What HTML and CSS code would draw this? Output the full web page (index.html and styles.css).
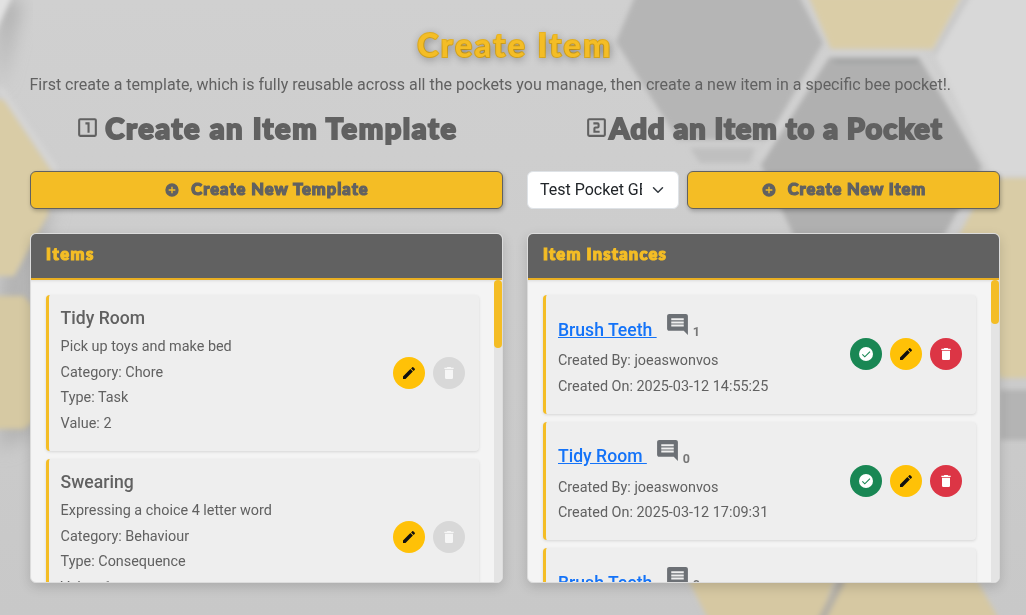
FILE: index.html
```html
<!DOCTYPE html>
<html lang="en">
<head>
<meta charset="utf-8">
<title>Create Item</title>
<link rel="stylesheet" href="styles.css">
</head>
<body>
<svg class="backdrop" viewBox="0 0 1026 615" preserveAspectRatio="none" aria-hidden="true">
  <defs>
    <filter id="soft" x="-20%" y="-20%" width="140%" height="140%"><feGaussianBlur stdDeviation="2.5"/></filter>
    <filter id="wide" x="-50%" y="-50%" width="200%" height="200%"><feGaussianBlur stdDeviation="9"/></filter>
    <linearGradient id="base" x1="0" y1="0" x2="0" y2="1"><stop offset="0" stop-color="#d0d0d0"/><stop offset="1" stop-color="#c8c8c8"/></linearGradient>
  </defs>
  <rect width="1026" height="615" fill="url(#base)"/>
  <path d="M0 90V0H22Z" fill="#aeaeae" filter="url(#wide)"/>
  <path d="M-8 40V-8H14Z" fill="#e2e2e2" filter="url(#soft)"/>
  <path d="M30 215L55 200 30 280 40 430 0 450V280Z" fill="#b2b2b2" filter="url(#wide)"/>
  <g filter="url(#soft)">
    <path d="M975-8H1040V176H992L932 48Z" fill="#d8d8d8"/>
    <path d="M968-4L934 54" stroke="#c8c8c8" stroke-width="5"/>
    <path d="M636-6H798L823 43 767 140H678L616 42Z" fill="#b5b5b5"/>
    <path d="M690 148H755L750 163H700Z" fill="#bfbfbf"/>
    <path d="M829 57H921L982 167 946 232 930 260H805L761 165Z" fill="#b0b0b0"/>
    <path d="M760 158L828 54H920L985 164" fill="none" stroke="#d2d2d2" stroke-width="5"/>
    <path d="M834 61H918" stroke="#a4a6a6" stroke-width="5"/>
    <path d="M808-5H962L933 49H831Z" fill="#dacda7"/>
    <path d="M1000 178H1035V378H1000L954 245 985 186Z" fill="#d9cca6"/>
    <path d="M986 180L950 238" stroke="#cfcfcf" stroke-width="6"/>
    <path d="M1000 390H1035V440H1000Z" fill="#b4b4b4"/>
    <path d="M-8 98L4 100 52 172 48 215 14 276H-8Z" fill="#d9cca6"/>
    <path d="M0 88L56 170" stroke="#d5d5d5" stroke-width="5"/>
    <path d="M-8 296H24L36 310V420L24 429H-8Z" fill="#d6c9a3"/>
    <path d="M686 575H836L818 625H711Z" fill="#d6c8a2"/>
    <path d="M846 575H974L1002 625H824Z" fill="#d6c8a2"/>
    <path d="M842 580L819 625" stroke="#b6b1a6" stroke-width="8"/>
  </g>
</svg>
<svg class="sprite" aria-hidden="true">
  <symbol id="plus" viewBox="0 0 24 24"><path d="M17 13h-4v4h-2v-4H7v-2h4V7h2v4h4m-5-9A10 10 0 1 0 12 22 10 10 0 0 0 12 2Z"/></symbol>
  <symbol id="pencil" viewBox="0 0 24 24"><path d="M20.71 7.04c.39-.39.39-1.04 0-1.41l-2.34-2.34c-.37-.39-1.02-.39-1.41 0l-1.84 1.83 3.75 3.75M3 17.25V21h3.75L17.81 9.93l-3.75-3.75L3 17.25Z"/></symbol>
  <symbol id="trash" viewBox="0 0 24 24"><path d="M19 4h-3.5l-1-1h-5l-1 1H5v2h14M6 19a2 2 0 0 0 2 2h8a2 2 0 0 0 2-2V7H6v12Z"/></symbol>
  <symbol id="check" viewBox="0 0 24 24"><circle cx="12" cy="12" r="10.5"/><path class="tick" d="M6.5 12.5l3.7 3.7L18 8.3"/></symbol>
  <symbol id="comment" viewBox="0 0 24 24"><path d="M21.99 4c0-1.1-.89-2-1.99-2H4c-1.1 0-2 .9-2 2v12c0 1.1.9 2 2 2h14l4 4-.01-18zM18 14H6v-2h12v2zm0-3H6V9h12v2zm0-3H6V6h12v2z"/></symbol>
  <symbol id="one" viewBox="0 0 24 24"><path d="M14 17h-2V9h-2V7h4m5 12H5V5h14m0-2H5a2 2 0 0 0-2 2v14a2 2 0 0 0 2 2h14a2 2 0 0 0 2-2V5a2 2 0 0 0-2-2Z"/></symbol>
  <symbol id="two" viewBox="0 0 24 24"><path d="M15 15h-4v-2h2a2 2 0 0 0 2-2V9a2 2 0 0 0-2-2H9v2h4v2h-2a2 2 0 0 0-2 2v4h6m4 2H5V5h14m0-2H5a2 2 0 0 0-2 2v14a2 2 0 0 0 2 2h14a2 2 0 0 0 2-2V5a2 2 0 0 0-2-2Z"/></symbol>
</svg>
<main class="page">
  <h1 class="title">Create Item</h1>
  <p class="intro">First create a template, which is fully reusable across all the pockets you manage, then create a new item in a specific bee pocket!.</p>
  <div class="columns">
    <section class="column">
      <h2 class="step"><svg class="step-icon"><use href="#one"/></svg><span class="step-text step-text-first">Create an Item Template</span></h2>
      <div class="toolbar"><button class="create"><svg class="plus"><use href="#plus"/></svg><span class="label-template">Create New Template</span></button></div>
      <div class="card">
        <h3 class="card-header"><span class="head-items">Items</span></h3>
        <div class="card-body">
          <div class="list">
            <article class="item">
              <div class="info"><h4 class="name">Tidy Room</h4><p>Pick up toys and make bed</p><p>Category: Chore</p><p>Type: Task</p><p>Value: 2</p></div>
              <div class="actions"><button class="round edit"><svg><use href="#pencil"/></svg></button><button class="round disabled"><svg><use href="#trash"/></svg></button></div>
            </article>
            <article class="item">
              <div class="info"><h4 class="name">Swearing</h4><p>Expressing a choice 4 letter word</p><p>Category: Behaviour</p><p>Type: Consequence</p><p>Value: 1</p></div>
              <div class="actions"><button class="round edit"><svg><use href="#pencil"/></svg></button><button class="round disabled"><svg><use href="#trash"/></svg></button></div>
            </article>
          </div>
          <div class="track"><div class="thumb thumb-items"></div></div>
        </div>
      </div>
    </section>
    <section class="column">
      <h2 class="step"><svg class="step-icon"><use href="#two"/></svg><span class="step-text step-text-second">Add an Item to a Pocket</span></h2>
      <div class="toolbar">
        <div class="select"><span class="select-value">Test Pocket GB</span><svg class="chevron" viewBox="0 0 16 16"><path d="m2 5 6 6 6-6"/></svg></div>
        <button class="create"><svg class="plus"><use href="#plus"/></svg><span class="label-item">Create New Item</span></button>
      </div>
      <div class="card">
        <h3 class="card-header"><span class="head-instances">Item Instances</span></h3>
        <div class="card-body">
          <div class="list">
            <article class="item instance">
              <div class="info"><h4 class="name"><a href="#">Brush Teeth </a><svg class="comment"><use href="#comment"/></svg><span class="count">1</span></h4><p>Created By: joeaswonvos</p><p>Created On: 2025-03-12 14:55:25</p></div>
              <div class="actions"><button class="round done"><svg><use href="#check"/></svg></button><button class="round edit"><svg><use href="#pencil"/></svg></button><button class="round delete"><svg><use href="#trash"/></svg></button></div>
            </article>
            <article class="item instance">
              <div class="info"><h4 class="name"><a href="#">Tidy Room </a><svg class="comment"><use href="#comment"/></svg><span class="count">0</span></h4><p>Created By: joeaswonvos</p><p>Created On: 2025-03-12 17:09:31</p></div>
              <div class="actions"><button class="round done"><svg><use href="#check"/></svg></button><button class="round edit"><svg><use href="#pencil"/></svg></button><button class="round delete"><svg><use href="#trash"/></svg></button></div>
            </article>
            <article class="item instance">
              <div class="info"><h4 class="name"><a href="#">Brush Teeth </a><svg class="comment"><use href="#comment"/></svg><span class="count">0</span></h4></div>
            </article>
          </div>
          <div class="track"><div class="thumb thumb-instances"></div></div>
        </div>
      </div>
    </section>
  </div>
</main>
</body>
</html>
```
FILE: styles.css
```css
* { box-sizing: border-box; }
body { margin: 0; height: 615px; overflow: hidden; font-family: Roboto, "Liberation Sans", sans-serif; color: #616161; }
h1, h2, h3, h4, p { margin: 0; }
button { font: inherit; border: 0; padding: 0; }
svg { fill: currentColor; flex: none; }
.backdrop { position: fixed; inset: 0; width: 100%; height: 100%; z-index: -1; }
.sprite { display: none; }
.page { padding: 26px 26px 0 30px; }

.title, .step, .create, .card-header { font-family: Lato, "Open Sans", sans-serif; font-weight: 900; white-space: nowrap; paint-order: stroke fill; -webkit-text-stroke: 2px currentColor; stroke-linejoin: round; }
.title { height: 38px; line-height: 38px; font-size: 32px; text-align: center; color: #f4bd25; letter-spacing: 2.5px; text-shadow: 1px 2px 8px rgba(0, 0, 0, .45); }
.intro { height: 24px; margin-top: 9px; margin-left: -.5px; line-height: 24px; font-size: 16px; white-space: nowrap; }

.columns { display: grid; grid-template-columns: 473px 473px; gap: 24px; margin-top: 13px; }
.step { height: 36px; display: flex; align-items: center; justify-content: center; font-size: 29px; line-height: 36px; }
.step-icon { width: 25px; height: 25px; margin-top: -2px; stroke: none; }
.step-text-first { margin-left: 5px; letter-spacing: 1.6px; }
.step-text-second { letter-spacing: 1px; }

.toolbar { display: flex; gap: 8px; height: 38px; margin-top: 25px; }
.create { flex: 1; display: flex; align-items: center; justify-content: center; gap: 11px; padding-bottom: 2px; font-size: 16.5px; color: #616161; background: #f4bd25; border: 1px solid #616161; border-radius: 6px; box-shadow: 1px 2px 4px rgba(0, 0, 0, .25); -webkit-text-stroke-width: 1.2px; }
.label-template { letter-spacing: 1px; }
.label-item { letter-spacing: .9px; }
.plus { width: 16px; height: 16px; margin-top: 1px; }
.select { width: 152px; display: flex; align-items: center; background: #fff; border: 1px solid #dee2e6; border-radius: 6px; padding-left: 12px; color: #212529; }
.select-value { width: 102px; overflow: hidden; white-space: nowrap; font-size: 16px; line-height: 24px; }
.chevron { width: 12px; height: 12px; margin-left: 10px; fill: none; stroke: #343a40; stroke-width: 2; stroke-linecap: round; stroke-linejoin: round; }

.card { height: 350px; margin-top: 24px; background: #f4f4f4; border: 1px solid #dcdcdc; border-radius: 6px; overflow: hidden; box-shadow: 0 4px 12px rgba(0, 0, 0, .15); }
.card-header { height: 46px; padding: 0 15px; line-height: 41px; font-size: 16.5px; color: #f4bd25; background: #616161; border-bottom: 2px solid #e8ae22; -webkit-text-stroke-width: 1.2px; }
.head-items { letter-spacing: 1.6px; }
.head-instances { letter-spacing: 1.2px; }
.card-body { display: flex; height: 302px; box-shadow: inset 0 3px 3px -2px rgba(0, 0, 0, .1); }
.list { flex: 1; height: 302px; padding: 15px 15px 0; overflow: hidden; }
.track { width: 8px; background: #e4e4e4; }
.thumb { background: #f4bd25; border-radius: 4px; }
.thumb-items { height: 68px; }
.thumb-instances { height: 44px; }

.item { display: flex; justify-content: space-between; align-items: center; height: 156px; margin-bottom: 8px; padding: 0 14px 0 12px; background: #eee; border-left: 3px solid #f4bd25; border-radius: 4px; box-shadow: 0 1px 3px rgba(0, 0, 0, .12); }
.info { height: 100%; padding-top: 12px; margin-left: -.4px; }
.name { height: 22px; margin-bottom: 5px; line-height: 22px; font-size: 17.6px; font-weight: 500; white-space: pre; }
.info p { font-size: 14.4px; line-height: 25.6px; white-space: nowrap; }
.instance { height: 118.7px; }
.instance .info { padding-top: 17px; margin-left: 0; }
.instance .name { display: flex; align-items: center; height: 35px; margin-bottom: 1px; }
.name a { color: #1473f8; text-decoration: underline; }
.comment { width: 25px; height: 25px; margin: -11px 0 0 8px; color: #6c7075; }
.count { margin: 5px 0 0 3px; font-size: 12.5px; font-weight: 700; color: #777; }

.actions { display: flex; gap: 8px; }
.round { width: 32px; height: 32px; border-radius: 50%; display: flex; align-items: center; justify-content: center; color: #fff; }
.round svg { width: 16px; height: 16px; }
.edit { background: #ffc107; color: #111; }
.disabled { background: #d8d8d8; color: #f6f6f6; }
.done { background: #198754; }
.delete { background: #dc3545; }
.tick { fill: none; stroke: #198754; stroke-width: 1.7; }
```
